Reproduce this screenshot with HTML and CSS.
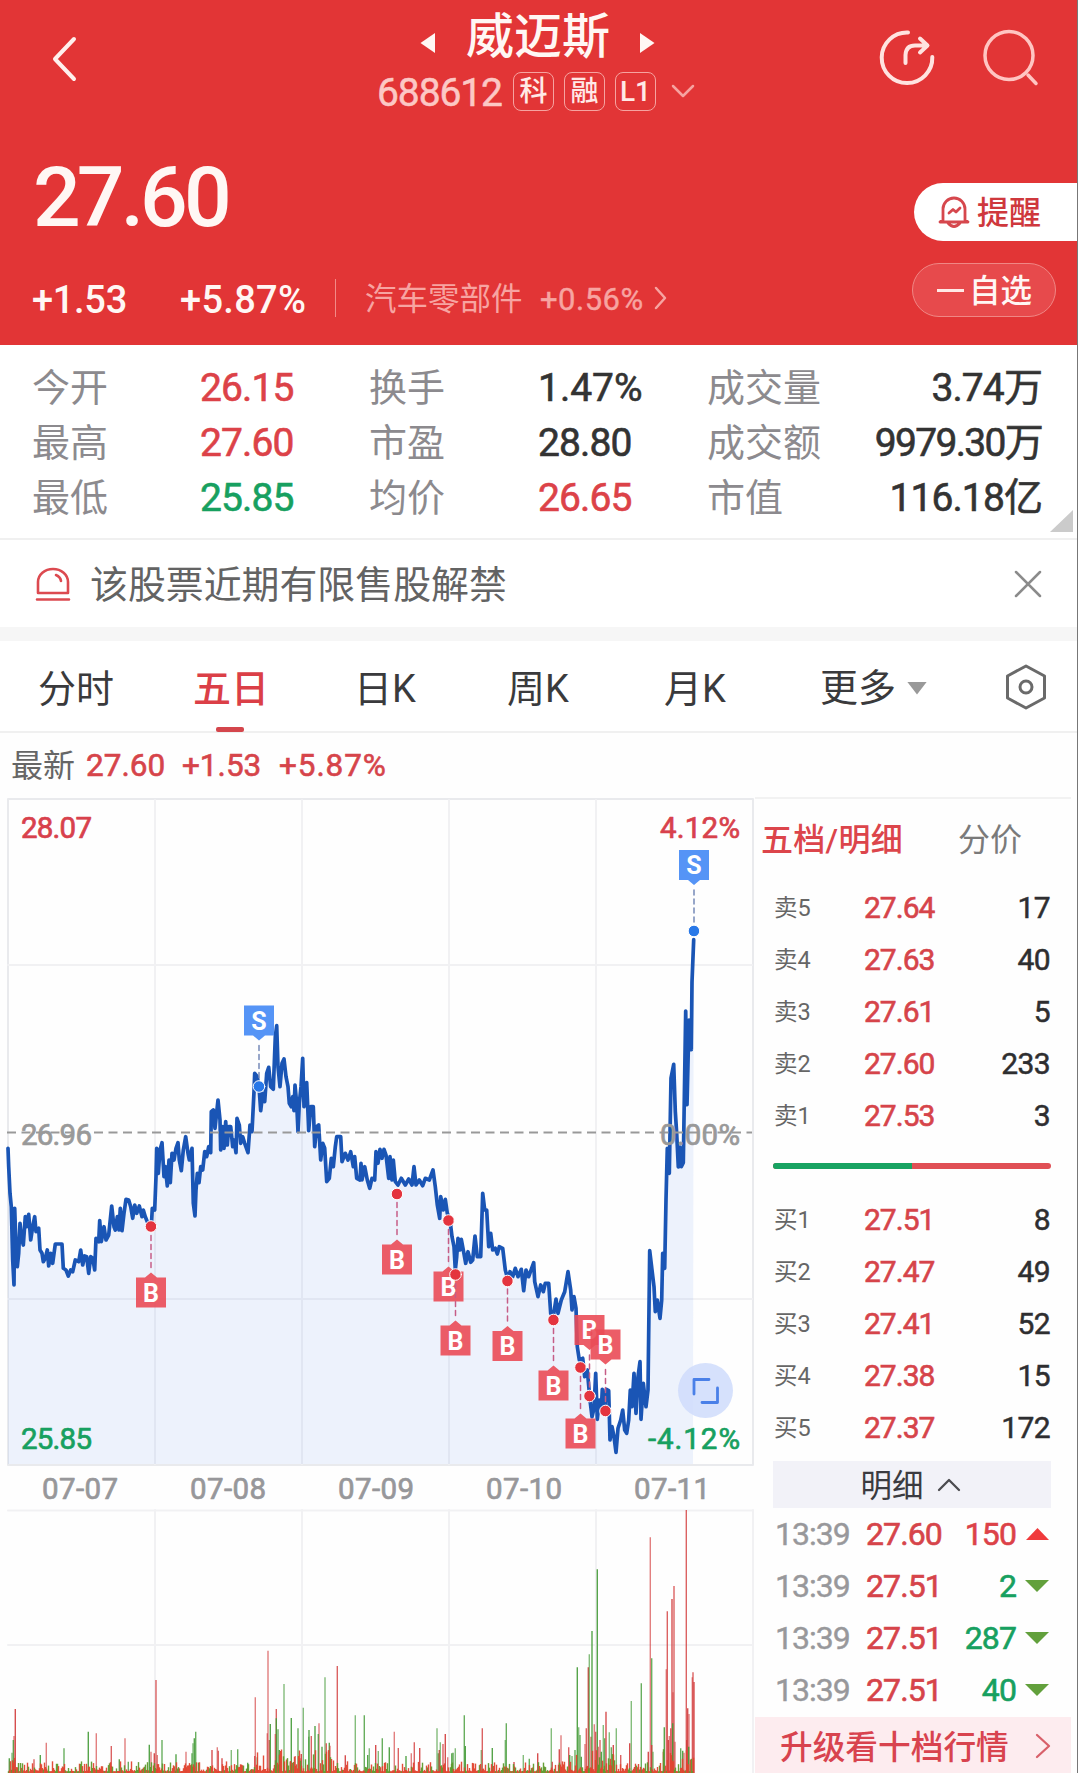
FILE: index.html
```html
<!DOCTYPE html>
<html lang="zh-CN">
<head>
<meta charset="utf-8">
<title>威迈斯 688612</title>
<link rel="stylesheet" href="styles.css">
</head>
<body>
<div class="app">
  <header class="hero">
    <div class="topbar">
      <svg class="back" width="26" height="46" viewBox="0 0 26 46"><path d="M23 3L4 23L23 43"/></svg>
      <div class="title">
        <div class="name-row">
          <svg width="18" height="24" viewBox="0 0 18 24"><path d="M1.500 12L16 2V22Z"/></svg>
          <h1>威迈斯</h1>
          <svg width="18" height="24" viewBox="0 0 18 24"><path d="M16.500 12L2 2V22Z"/></svg>
        </div>
        <div class="code-row">
          <span class="code">688612</span>
          <span class="badge">科</span><span class="badge">融</span><span class="badge">L1</span>
          <svg class="more" width="24" height="14" viewBox="0 0 24 14"><path d="M2 2L12 12L22 2"/></svg>
        </div>
      </div>
      <div class="actions">
        <svg class="share" width="60" height="60" viewBox="0 0 60 60"><path d="M31 4.500A25.300 25.300 0 1 0 55.300 29M28.500 35V27Q29 17.500 38 17.500H50M43 10.500L50.500 17.500L43 24.500"/></svg>
        <svg class="search" width="60" height="60" viewBox="0 0 60 60"><circle cx="27" cy="27.500" r="24"/><path d="M46 47L54 55.500"/></svg>
      </div>
    </div>
    <div class="price-row">
      <div class="price">27.60</div>
      <div class="remind">
        <svg width="32" height="34" viewBox="0 0 32 34"><path d="M5 25V14A11 11 0 0 1 27 14V25L30 27H2ZM10 28Q16 35 22 28M11 18L15 14.500L18 17L22 13"/></svg>
        <span>提醒</span>
      </div>
    </div>
    <div class="change-row">
      <span class="chg">+1.53</span><span class="pct">+5.87%</span>
      <i class="rule"></i>
      <span class="sector">汽车零部件</span><span class="sector-pct">+0.56%</span>
      <svg class="go" width="14" height="24" viewBox="0 0 14 24"><path d="M2 2L11 12L2 22"/></svg>
      <div class="watch"><i></i><span>自选</span></div>
    </div>
  </header>

  <section class="stats">
    <span class="k">今开</span><span class="v up">26.15</span><span class="k">换手</span><span class="v wide">1.47%</span><span class="k">成交量</span><span class="v end">3.74万</span>
    <span class="k">最高</span><span class="v up">27.60</span><span class="k">市盈</span><span class="v">28.80</span><span class="k">成交额</span><span class="v end tight">9979.30万</span>
    <span class="k">最低</span><span class="v down">25.85</span><span class="k">均价</span><span class="v up">26.65</span><span class="k">市值</span><span class="v end">116.18亿</span>
    <i class="corner"></i>
  </section>

  <section class="notice">
    <svg class="siren" width="36" height="38" viewBox="0 0 36 38"><path d="M3 28V17A15 13 0 0 1 33 17V28ZM2 34.500H34M21 10Q25.500 12 26 16"/></svg>
    <p>该股票近期有限售股解禁</p>
    <svg class="close" width="28" height="28" viewBox="0 0 28 28"><path d="M2 2L26 26M26 2L2 26"/></svg>
  </section>

  <nav class="tabs">
    <span>分时</span><span class="on">五日</span><span>日K</span><span>周K</span><span>月K</span><span class="drop">更多<i></i></span>
    <svg width="44" height="46" viewBox="0 0 44 46"><path d="M22 2L40.500 12V34L22 44L3.500 34V12Z"/><circle cx="22" cy="23" r="6"/></svg>
  </nav>

  <div class="latest"><span>最新</span><b class="l1">27.60</b><b class="l2">+1.53</b><b class="l3">+5.87%</b></div>

  <main class="body">
    <svg id="chart" class="chart" width="755" height="975" viewBox="0 798 755 975"></svg>
    <aside class="side">
      <div class="side-tabs"><span class="on">五档/明细</span><span>分价</span></div>
      <div class="book">
        <div><span>卖5</span><b>27.64</b><em>17</em></div>
        <div><span>卖4</span><b>27.63</b><em>40</em></div>
        <div><span>卖3</span><b>27.61</b><em>5</em></div>
        <div><span>卖2</span><b>27.60</b><em>233</em></div>
        <div><span>卖1</span><b>27.53</b><em>3</em></div>
      </div>
      <div class="ratio"><i></i></div>
      <div class="book">
        <div><span>买1</span><b>27.51</b><em>8</em></div>
        <div><span>买2</span><b>27.47</b><em>49</em></div>
        <div><span>买3</span><b>27.41</b><em>52</em></div>
        <div><span>买4</span><b>27.38</b><em>15</em></div>
        <div><span>买5</span><b>27.37</b><em>172</em></div>
      </div>
      <div class="detail-head"><span>明细</span><svg width="24" height="14" viewBox="0 0 24 14"><path d="M2 12L12 2L22 12"/></svg></div>
      <div class="ticks">
        <div><span>13:39</span><b>27.60</b><em class="up">150</em><i class="tri-up"></i></div>
        <div><span>13:39</span><b>27.51</b><em class="down">2</em><i class="tri-down"></i></div>
        <div><span>13:39</span><b>27.51</b><em class="down">287</em><i class="tri-down"></i></div>
        <div><span>13:39</span><b>27.51</b><em class="down">40</em><i class="tri-down"></i></div>
      </div>
      <div class="promo"><span>升级看十档行情</span><svg width="16" height="26" viewBox="0 0 16 26"><path d="M2 2L14 13L2 24"/></svg></div>
    </aside>
  </main>
</div>
<script src="chart.js"></script>
</body>
</html>
```
FILE: styles.css
```css
* { box-sizing: border-box; margin: 0; padding: 0; }
body { background: #fefefe; font-family: Roboto, "Noto Sans CJK SC", sans-serif; color: #333; }
svg { display: block; fill: none; flex: none; stroke-linecap: round; stroke-linejoin: round; }
span, b, em, h1, p { white-space: nowrap; }
b, em { font-weight: 500; font-style: normal; }
.app { width: 1078px; height: 1773px; overflow: hidden; border-right: 1px solid #777; display: flex; flex-direction: column; }
.up { color: #dc4248; }
.down { color: #17a060; }

.hero { height: 345px; flex: none; background: #e23536; color: #fff7f4; }
.topbar { height: 130px; display: flex; padding: 0 35px 0 51px; }
.back { margin-top: 36px; stroke: #fff0ed; stroke-width: 4; }
.title { width: 320px; margin-left: 300px; }
.name-row { height: 69px; padding: 0 1px 0 42px; display: flex; align-items: center; }
.name-row h1 { font-size: 48px; font-weight: 500; line-height: 60px; width: 144px; margin: 5px 28px 0 29px; }
.name-row svg { fill: #fff7f4; margin-top: 17px; }
.code-row { height: 44px; display: flex; align-items: center; }
.code { font-size: 39px; letter-spacing: -1.100px; color: #fcc8c5; width: 136px; line-height: 44px; margin-top: 4px; -webkit-text-stroke: .5px currentColor; }
.badge { width: 41px; height: 39px; border: 1.500px solid #f6a3a0; border-radius: 8px; margin-right: 10px; text-align: center; font-size: 28px; line-height: 38px; font-weight: 500; color: #ffe9e6; }
.more { stroke: #f6a3a0; stroke-width: 2.500; margin-left: 5px; }
.actions { display: flex; margin-left: auto; gap: 45px; padding-top: 28px; }
.share { stroke: #ffe3e0; stroke-width: 4; }
.search { stroke: #ffc5c2; stroke-width: 3.500; }
.price-row { height: 125px; display: flex; justify-content: space-between; padding-left: 33px; }
.price { font-size: 84px; font-weight: 500; line-height: 100px; margin-top: 18px; letter-spacing: -3.900px; }
.remind { width: 163px; height: 58px; margin-top: 53px; background: #fff; border-radius: 29px 0 0 29px; display: flex; align-items: center; padding-left: 24px; gap: 7px; color: #cf383d; font-size: 32px; line-height: 46px; font-weight: 500; }
.remind span { margin-top: 2px; }
.remind svg { stroke: #d6474d; stroke-width: 2.800; }
.change-row { height: 90px; display: flex; align-items: flex-start; padding-left: 32px; font-size: 38px; font-weight: 500; line-height: 44px; }
.change-row > span { margin-top: 23px; }
.chg { width: 148px; letter-spacing: -.3px; }
.pct { width: 155px; letter-spacing: .3px; }
.rule { width: 1px; height: 38px; background: #f28a87; margin-top: 24px; }
.change-row .sector { width: 175px; margin: 23px 0 0 29px; font-size: 31.500px; font-weight: 400; color: #f7a4a1; }
.change-row .sector-pct { width: 114px; font-size: 31px; font-weight: 400; color: #f7a4a1; -webkit-text-stroke: .4px currentColor; letter-spacing: .5px; }
.go { stroke: #f7a4a1; stroke-width: 2.500; margin-top: 31px; }
.watch { margin: 8px 21px 0 auto; width: 144px; height: 54px; border: 1.500px solid #f08785; border-radius: 27px; background: #e74a4c; display: flex; align-items: center; padding-left: 24px; font-size: 31.500px; gap: 5px; }
.watch i { width: 27px; height: 3px; background: #ffe9e6; }
.watch span { margin-top: 3px; }

.stats { position: relative; height: 195px; flex: none; border-bottom: 2px solid #f0f0f0; padding: 15px 35px 0 32px; display: grid; grid-template-columns: 168px 169px 169px 169px 120px 1fr; grid-auto-rows: 55px; line-height: 55px; background: #fff; }
.k { font-size: 38px; color: #8c8a8e; margin-top: 1px; }
.v { font-size: 39px; letter-spacing: -.9px; font-weight: 400; -webkit-text-stroke: .6px currentColor; margin-top: 1px; }
.wide { letter-spacing: 0; }
.end { text-align: right; }
.tight { letter-spacing: -1.700px; }
.corner { position: absolute; right: 4px; bottom: 6px; width: 23px; height: 22px; background: #cbcbcb; clip-path: polygon(100% 0, 100% 100%, 0 100%); }

.notice { height: 87px; flex: none; display: flex; align-items: center; padding: 0 35px 0 35px; background: #fff; }
.siren { stroke: #dc4a50; stroke-width: 2.600; }
.notice p { font-size: 37.900px; line-height: 50px; color: #636363; margin: 3px 0 0 19px; }
.close { stroke: #8b8b8b; stroke-width: 2.500; margin-left: auto; }

.tabs { height: 106px; flex: none; border-top: 14px solid #f6f6f6; border-bottom: 2px solid #f0f0f0; display: grid; grid-template-columns: 156px 160px 153px 157px 156px 184px 1fr; align-items: center; padding-left: 38px; font-size: 38px; line-height: 96px; color: #3a3a3c; background: #fff; }
.tabs span { display: block; height: 90px; }
.tabs .on { color: #db3f47; font-weight: 500; position: relative; left: -1px; }
.tabs .on::after { content: ""; position: absolute; left: 23px; bottom: -1px; width: 28px; height: 5px; border-radius: 2px; background: #d4464c; }
.tabs .drop { display: flex; align-items: center; gap: 11px; padding-top: 4px; line-height: 90px; }
.drop i { width: 20px; height: 13px; background: #999; clip-path: polygon(0 0, 100% 0, 50% 100%); }
.tabs svg { stroke: #6a6a6a; stroke-width: 3; margin-top: 1px; }

.latest { height: 64px; flex: none; display: flex; font-size: 31.500px; line-height: 66px; padding-left: 11px; color: #666; }
.latest b { color: #d6444a; font-weight: 400; -webkit-text-stroke: .6px currentColor; }
.latest span { width: 75px; font-size: 32px; }
.l1 { width: 96px; }
.l2 { width: 97px; }
.latest .l3 { letter-spacing: .9px; }

.body { display: flex; height: 976px; flex: none; }
.chart { margin-top: 1px; }
.chart text { font-family: Roboto, sans-serif; }
.side { width: 316px; border-top: 2px solid #f2f2f2; }
.side-tabs { height: 83px; display: flex; justify-content: space-between; padding: 0 49px 0 6px; font-size: 32px; line-height: 82px; color: #7a7a7a; }
.side-tabs .on { color: #dc454b; font-weight: 500; letter-spacing: .3px; }
.book { padding: 0 21px 0 19px; }
.book div { height: 52px; line-height: 52px; display: grid; grid-template-columns: 90px 90px 1fr; }
.book span { font-size: 23.500px; color: #666; }
.book b { font-size: 30px; font-weight: 400; color: #d6444a; -webkit-text-stroke: .6px currentColor; letter-spacing: -1px; }
.book em { font-size: 30px; font-weight: 400; text-align: right; color: #2e2e30; -webkit-text-stroke: .5px currentColor; letter-spacing: -.6px; }
.ratio { height: 6px; margin: 21px 20px 25px 18px; border-radius: 3px; background: #e04f55; overflow: hidden; }
.ratio i { display: block; width: 50%; height: 6px; background: #18a362; }
.detail-head { height: 47px; margin: 7px 20px 0 18px; background: #f2f2f8; display: flex; align-items: center; justify-content: center; gap: 13px; padding-right: 3px; font-size: 31.500px; line-height: 47px; color: #3b3b40; }
.detail-head span { margin-top: 3px; }
.detail-head svg { stroke: #4c4c50; stroke-width: 2.300; }
.ticks { padding: 0 22px 0 20px; }
.ticks div { height: 52px; line-height: 52px; font-size: 32px; display: grid; grid-template-columns: 91px 84px 66px 1fr; align-items: center; }
.ticks span { color: #98989b; letter-spacing: -1px; -webkit-text-stroke: .4px currentColor; }
.ticks b { color: #d6444a; font-weight: 400; -webkit-text-stroke: .6px currentColor; letter-spacing: -.9px; }
.ticks em { text-align: right; font-weight: 400; -webkit-text-stroke: .6px currentColor; letter-spacing: -.9px; }
.ticks i { justify-self: end; }
.tri-up { width: 23px; height: 12px; background: #f03a3c; clip-path: polygon(0 100%, 100% 100%, 50% 0); }
.tri-down { width: 24px; height: 12px; background: #62a03c; clip-path: polygon(0 0, 100% 0, 50% 100%); }
.promo { height: 58px; margin-top: 1px; background: #fdecef; display: flex; align-items: center; justify-content: space-between; padding: 0 20px 0 25px; font-size: 32.700px; line-height: 60px; color: #d8434e; font-weight: 500; }
.promo span { margin-top: 3px; }
.promo svg { stroke: #d8606a; stroke-width: 2.300; }
```
FILE: chart.js
```js
const NS = "http://www.w3.org/2000/svg";
const chart = document.getElementById("chart");
function add(tag, attrs, text) {
  const el = document.createElementNS(NS, tag);
  for (const k in attrs) el.setAttribute(k, attrs[k]);
  if (text) el.textContent = text;
  chart.appendChild(el);
  return el;
}
// Samples are stored in thirds of a pixel, relative to an origin.
function unpack(ox, oy, data) {
  return data.trim().split(/\s+/).map(p => {
    const [x, y] = p.split(",").map(Number);
    return [ox + x / 3, oy + y / 3];
  });
}
const line = [
  ...unpack(0, 960, `24,565 26,620 30,700 34,740 38,900 42,975 44,745 48,860 52,920 56,880 60,790 64,830 70,855 76,770 80,800 86,763 92,840 98,800 104,770 108,815 116,805 120,870 126,880 130,905 136,895 142,870 146,918 152,880 158,910 166,852 186,852 190,925 198,930 205,948 212,930 218,935 226,900 236,905 242,870 248,915 254,888 260,890 266,940 272,890 278,895 284,930 288,835 296,845 299,782 304,845 312,800 318,840 326,825 335,738 342,800 346,810 352,770 357,810 361,745 366,812 372,760 378,718 386,720 392,740 398,775 404,735 410,760 418,738 426,770 430,750 436,770 442,785 454,800 457,745 464,750 468,650 470,565 475,640 480,570 486,548 492,650 496,620 502,678 507,600 511,668 516,580 522,600 528,565 534,548 538,600 544,632 550,570 557,530 564,580 568,600 576,565 580,730 585,768 588,690 592,640 597,668 602,620 608,630 614,575 620,590 626,560 632,578 634,455 640,450 645,505 654,420 660,480 662,570 668,500 672,565 677,485 682,555 686,500 692,500 698,560 702,540 708,578 711,475 718,495 722,550 728,530 734,550 744,578 750,495 756,515 762,395 764,340 772,350 777,380 782,452 788,400 794,425 800,340 806,322 812,380 820,388 826,230 830,197 834,320 840,380 846,310 852,297 858,350 864,380 868,430 874,440 878,410 882,452 885,375 890,430 894,515 898,430 903,380 908,295 912,440 920,368 926,512 932,440 940,440 944,560 950,500 956,495 962,600 968,550 974,565 980,665 988,655 994,595 1000,620 1006,560 1010,530 1022,530 1026,605 1036,580 1044,600 1052,575 1060,620 1064,590 1070,655`),
  ...unpack(360, 1100, `0,240 3,190 6,240 14,200 22,240 29,265 36,235 44,240 48,155 54,190 60,148 66,175 72,148 78,165 86,235 90,170 96,240 100,180 106,245 114,255 124,235 136,255 146,237 156,255 162,200 168,255 178,240 188,257 196,235 208,240 219,210 226,260 232,315 239,355 242,290 250,330 256,298 262,340 270,360 276,410 282,440 286,510 290,470 294,415 300,450 304,418 310,450 317,490 324,455 332,487 338,480 345,408 352,470 362,470 368,280 374,330 380,330 386,440 392,400 398,450 406,445 412,462 418,440 428,445 436,510 444,540 450,515 458,530 466,505 474,530 484,508 491,572 498,510 506,530 514,508 521,488 524,545 534,590 542,555 550,575 556,550 566,550 572,640 580,650 588,597 594,640 604,600 614,575 624,515 632,570 636,630 642,590 648,625 652,740 658,780 668,775 674,830 682,810 690,900 696,950 702,925 707,820 712,958 718,900 724,930 727,868 733,940 739,868 746,872 750,1020 756,980 762,1010 768,1057 774,985 782,960 788,930 794,990 800,1000 806,960 811,870 816,920 822,820 828,940 834,830 840,785 843,958 850,850 858,920 864,870 869,452 876,510 882,560 886,635 892,600 900,655 905,600 908,460 914,505 918,300 922,145 928,220 933,-66 941,-107 946,34 950,101 955,201 960,141 964,200 970,188 977,-267 981,14 987,-240 994,-151 996,-354 1001,-481`)
];

// Grid
const grid = { stroke: "#f1f1f3", "stroke-width": 2 };
add("rect", { x: 8, y: 799, width: 745, height: 666, stroke: "#e9eaed", "stroke-width": 2 });
for (const y of [965, 1299, 1510.500, 1645]) add("path", { d: `M8 ${y}H752`, ...grid });
for (const x of [155, 302, 449, 596]) add("path", { d: `M${x} 800V1464M${x} 1510V1773`, ...grid });
add("path", { d: "M753 1510V1773", ...grid });

// Price area and line
const pts = line.map(p => p[0].toFixed(1) + " " + p[1].toFixed(1)).join("L");
add("path", { d: `M8 1464L${pts}L693 1464Z`, fill: "#5a8be8", "fill-opacity": 0.1 });
const label = (x, y, t, fill, w, anchor) => add("text", { x, y, fill, stroke: fill, "stroke-width": 0.7, "font-size": 29.500, textLength: w, "text-anchor": anchor || "start" }, t);
label(21, 1145, "26.96", "#999", 71);
add("path", { d: `M${pts}`, stroke: "#1a55b5", "stroke-width": 3.700 });
add("path", { d: "M7 1132.500H752", stroke: "#999", "stroke-width": 2, "stroke-dasharray": "9 5.500", "stroke-linecap": "butt" });
label(21, 838, "28.07", "#d8414c", 71);
label(21, 1449, "25.85", "#17a060", 71);
label(740, 838, "4.12%", "#d8414c", 80, "end");
label(740, 1145, "0.00%", "#999", 80, "end");
label(740, 1449, "-4.12%", "#17a060", 92, "end");
["07-07", "07-08", "07-09", "07-10", "07-11"].forEach((d, i) => label(42 + i * 148, 1499, d, "#97979a", 76));

// Trade markers: x, dot y, flag top, kind
for (const [x, dot, top, kind] of [
  [259, 1086.500, 1005.500, "S"], [694, 931, 850, "S"], [151, 1226.500, 1277.500, "B"],
  [397, 1194, 1244.500, "B"], [448.500, 1220.500, 1271.500, "B"], [455.500, 1274.500, 1325.500, "B"],
  [507.500, 1281, 1331, "B"], [553.500, 1320, 1370.500, "B"], [589.500, 1396, 1315, "B"],
  [580.500, 1367.500, 1418.500, "B"], [605.500, 1411, 1329.500, "B"]
]) {
  const c = kind === "S" ? "#4288f5" : "#ea4b57", above = top < dot, edge = above ? top + 30 : top;
  const tip = edge + (above ? 5 : -5);
  add("path", { d: `M${x} ${above ? tip + 5 : tip - 5}V${dot}`, stroke: kind === "S" ? "#7589b8" : "#c65d86", "stroke-width": 1.500, "stroke-dasharray": "5 4" });
  add("path", { d: `M${x - 15} ${top}h30v30h-30Z M${x - 6} ${edge}L${x} ${tip}L${x + 6} ${edge}Z`, fill: c, "fill-opacity": 0.9 });
  add("text", { x, y: top + 24, fill: "#fff", "font-size": 25, "font-weight": 700, "text-anchor": "middle" }, kind);
  add("circle", { cx: x, cy: dot, r: 5.800, fill: kind === "S" ? "#2878e8" : "#e4343e", stroke: "#fff", "stroke-width": 1 });
}

// Full-screen button
add("circle", { cx: 705.500, cy: 1390.500, r: 27.500, fill: "#cfdcfb", "fill-opacity": 0.85 });
add("path", { d: "M694 1394V1379.500H709M702 1402.500H717.500V1388", stroke: "#4a80e8", "stroke-width": 2.800 });

// Volume
const bar = (x, y, color, o) => add("path", { d: `M${x.toFixed(1)} 1773V${y.toFixed(1)}`, stroke: color, "stroke-width": 1.400, "stroke-opacity": o, "stroke-linecap": "butt" });
const colors = { r: "#d23b3b", g: "#429a36" };
const volume = (ox, data) => data.split(" ").forEach((p, i) => {
  const m = p.match(/(\d+),(\d+)([rg])/);
  bar(ox + m[1] / 3, 1480 + m[2] / 3, colors[m[3]], [0.9, 0.65, 0.8][i % 3]);
});
volume(0, "46,687r 42,768r 40,780g 28,835g 36,818g 102,838r 121,825g 139,788r 192,805g 265,755g 289,760r 334,798r 358,838g 375,775r 385,845g 448,794g 453,815r 468,600r 463,820r 472,825r 486,780g 528,823g 558,815r 587,755g 583,775g 579,790g 576,820g 636,810r 652,802r 655,812r 666,835r 694,810g 713,808g 743,848g 766,652r 764,828r 772,832g 804,512r 808,780r 811,732g 802,760r 829,687r 829,715g 826,762r 834,748g 838,810g 852,612g 871,845g 874,714g 886,828r 894,745g 904,822r 910,683g 900,835r 927,750g 926,770g 934,768r 945,738g 957,730r 955,762g 966,800g 975,592g 979,790r 988,788g 990,797r 1012,558r 1036,826r 1066,706g 1093,706g 1103,825g 1108,805g");
volume(370, "17,795r 25,813g 37,775g 58,802g 73,755r 85,804r 108,828g 124,820r 133,787r 149,804r 201,745g 205,820g 208,810r 211,787g 219,792r 226,762r 233,832r 245,820g 249,818g 256,805g 283,706g 286,798g 334,810g 337,745r 367,804g 406,780g 409,730g 432,846r 460,825g 478,836g 503,820r 544,745g 547,845r 568,808r 573,766r 596,802r 599,825g 606,828g 615,810g 622,562g 626,742g 630,765g 634,830g 645,792r 649,745r 655,562r 658,523g 663,770r 666,453g 673,733r 677,755r 682,268g 685,800r 690,780r 694,815g 700,735g 704,775g 708,695r 718,757g 724,802g 730,795r 739,745g 752,825r 779,790r 784,663g 814,610g 835,815r 841,172r 845,535g 845,795r 849,815g 880,815r 883,742g 889,568r 892,394r 895,780r 898,768r 902,745r 906,357r 909,637r 912,318r 908,730g 915,785r 932,805g 938,812g 942,818r 949,90r 953,685r 957,702r 950,780r 956,800g 967,592r 969,577r 972,606r");
let seed = 7;
const rnd = () => (seed = (seed * 16807) % 2147483647) / 2147483647;
for (let x = 8; x < 694; x += 1) {
  const busy = (x > 255 && x < 335) || (x > 575 && x < 615) || x > 662 || x < 16;
  const h = 1.800 + Math.pow(rnd(), 2.500) * (busy ? 22 : 10);
  bar(x + 0.500, 1773 - h, rnd() < 0.68 ? "#e2452f" : "#5f9a2c", 0.95);
}
```
